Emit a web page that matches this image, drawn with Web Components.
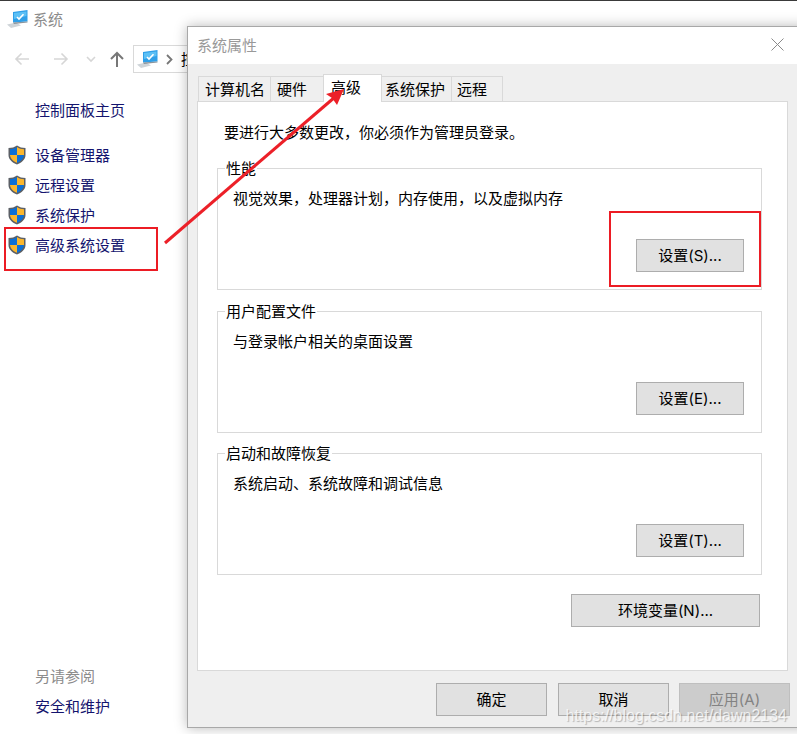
<!DOCTYPE html>
<html lang="zh">
<head>
<meta charset="utf-8">
<title>系统属性</title>
<style>
html, body { margin: 0; padding: 0; background: #fff; }
body { font: 15px/20px "Noto Sans", "Noto Sans CJK SC", sans-serif; color: #000; }
</style>
</head>
<body>
<x-desk>
	<x-explorer></x-explorer>
	<x-dialog heading="系统属性">
		<x-tabs>
			<x-tab style="width:73px;padding-left:6px">计算机名</x-tab>
			<x-tab style="width:54px;padding-left:6px">硬件</x-tab>
			<x-tab selected style="width:59px;padding-left:7px">高级</x-tab>
			<x-tab style="width:71px;padding-left:3px">系统保护</x-tab>
			<x-tab style="width:52px;padding-left:5px">远程</x-tab>
		</x-tabs>
		<x-panel>
			<x-group legend="性能" text="视觉效果，处理器计划，内存使用，以及虚拟内存" action="设置(S)..."></x-group>
			<x-group legend="用户配置文件" text="与登录帐户相关的桌面设置" action="设置(E)..."></x-group>
			<x-group legend="启动和故障恢复" text="系统启动、系统故障和调试信息" action="设置(T)..."></x-group>
		</x-panel>
	</x-dialog>
	<x-annotations></x-annotations>
</x-desk>

<script>
'use strict';

const pcIcon = `
<svg width="22" height="20" viewBox="0 0 22 20" style="display:block">
	<path d="M0 15.5 L9 13.5 L14 16.5 L4 19 Z" fill="#cfd4d8"/>
	<path d="M6 3 L20.5 1 V12.5 L6 13.5 Z" fill="#2f9fe8"/>
	<path d="M7 4 L19.5 2.4 V7 L7 10 Z" fill="#5cc0f5"/>
	<path d="M6 13.5 L20.5 12.5 V13.5 L7 15 Z" fill="#8a949c"/>
	<path d="M10 8 L12 10 L16.5 5.2" fill="none" stroke="#fff" stroke-width="1.6"/>
</svg>`;

const shieldIcon = `
<svg width="18" height="20" viewBox="0 0 18 20" style="display:block">
	<path d="M9 .5 C11.5 2.2 14 3 17.5 3 V10 C17.5 14.5 13.5 17.8 9 19.5 C4.5 17.8 .5 14.5 .5 10 V3 C4 3 6.5 2.2 9 .5 Z" fill="#5c6066"/>
	<path d="M9 2 V10 H2 V4.3 C4.8 4.2 7 3.4 9 2 Z" fill="#0b6fd6"/>
	<path d="M9 2 C11 3.4 13.2 4.2 16 4.3 V10 H9 Z" fill="#fbb62c"/>
	<path d="M2 10 H9 V17.8 C5.4 16.3 2.3 13.8 2 10 Z" fill="#fbb62c"/>
	<path d="M9 10 H16 C15.7 13.8 12.6 16.3 9 17.8 Z" fill="#0b6fd6"/>
</svg>`;

const deskTemplate = document.createElement('template');
deskTemplate.innerHTML = `
<style>
:host {
	display: block;
	position: relative;
	width: 797px;
	height: 734px;
	overflow: hidden;
	background: #fff;
}
</style>
<slot></slot>
`;

class XDesk extends HTMLElement {
	constructor() {
		super();
		this.attachShadow({mode: 'open'}).appendChild(deskTemplate.content.cloneNode(true));
	}
}

customElements.define('x-desk', XDesk);

const explorerTemplate = document.createElement('template');
explorerTemplate.innerHTML = `
<style>
:host {
	display: flex;
	flex-direction: column;
	height: 734px;
	box-sizing: border-box;
	border-top: 1px solid #3a3a3a;
	padding: 8px 0 18px 0;
}
.title {
	display: flex;
	align-items: center;
	gap: 4px;
	height: 20px;
	padding-left: 7px;
	color: #8c8c8c;
}
.nav {
	display: flex;
	align-items: center;
	height: 28px;
	margin-top: 16px;
	padding-left: 14px;
}
.nav svg { display: block; flex: none; }
.address {
	display: flex;
	align-items: center;
	box-sizing: border-box;
	width: 200px;
	height: 28px;
	margin-left: 9px;
	border: 1px solid #d9d9d9;
	padding-left: 3px;
}
.address span { margin-left: 8px; white-space: nowrap; }
.home { margin: 27px 0 0 35px; color: #14146e; }
.tasks {
	display: flex;
	flex-direction: column;
	gap: 10px;
	margin: 25px 0 0 8px;
	color: #14146e;
}
.tasks div { display: flex; align-items: center; gap: 9px; height: 20px; }
.also { margin: auto 0 0 35px; color: #8c8c8c; }
.safe { margin: 10px 0 0 35px; color: #14146e; }
</style>
<div class="title">${pcIcon}<span>系统</span></div>
<div class="nav">
	<svg width="16" height="14" viewBox="0 0 16 14"><path d="M15 7 H2 M7.5 1.5 L2 7 L7.5 12.5" fill="none" stroke="#d6d6d6" stroke-width="1.6"/></svg>
	<svg style="margin-left:23px" width="16" height="14" viewBox="0 0 16 14"><path d="M1 7 H14 M8.5 1.5 L14 7 L8.5 12.5" fill="none" stroke="#d6d6d6" stroke-width="1.6"/></svg>
	<svg style="margin-left:17px" width="10" height="7" viewBox="0 0 10 7"><path d="M1 1 L5 5 L9 1" fill="none" stroke="#d6d6d6" stroke-width="1.6"/></svg>
	<svg style="margin-left:14px" width="14" height="16" viewBox="0 0 14 16"><path d="M7 16 V2 M1 8 L7 2 L13 8" fill="none" stroke="#777" stroke-width="2"/></svg>
	<div class="address">
		${pcIcon}
		<svg style="margin-left:7px" width="7" height="11" viewBox="0 0 7 11"><path d="M1 1 L5.5 5.5 L1 10" fill="none" stroke="#777" stroke-width="1.8"/></svg>
		<span>控制面板</span>
	</div>
</div>
<div class="home">控制面板主页</div>
<div class="tasks">
	<div>${shieldIcon}<span>设备管理器</span></div>
	<div>${shieldIcon}<span>远程设置</span></div>
	<div>${shieldIcon}<span>系统保护</span></div>
	<div>${shieldIcon}<span>高级系统设置</span></div>
</div>
<div class="also">另请参阅</div>
<div class="safe">安全和维护</div>
`;

class XExplorer extends HTMLElement {
	constructor() {
		super();
		this.attachShadow({mode: 'open'}).appendChild(explorerTemplate.content.cloneNode(true));
	}
}

customElements.define('x-explorer', XExplorer);

const buttonTemplate = document.createElement('template');
buttonTemplate.innerHTML = `
<style>
:host {
	display: flex;
	align-items: center;
	justify-content: center;
	box-sizing: border-box;
	flex: none;
	width: 108px;
	height: 33px;
	background: #e1e1e1;
	border: 1px solid #adadad;
	color: #000;
	font-family: Inter, "Noto Sans CJK SC", sans-serif;
}
:host([disabled]) {
	background: #cccccc;
	border-color: #bfbfbf;
	color: #838383;
}
</style>
<slot></slot>
`;

class XButton extends HTMLElement {
	constructor() {
		super();
		this.attachShadow({mode: 'open'}).appendChild(buttonTemplate.content.cloneNode(true));
	}
}

customElements.define('x-button', XButton);

const dialogTemplate = document.createElement('template');
dialogTemplate.innerHTML = `
<style>
:host {
	display: flex;
	flex-direction: column;
	position: absolute;
	left: 187px;
	top: 26px;
	width: 630px;
	height: 702px;
	box-sizing: border-box;
	border: 1px solid #a8a8a8;
	background: #efefef;
	box-shadow: 0 0 12px rgba(0, 0, 0, .28);
}
.head {
	display: flex;
	align-items: center;
	justify-content: space-between;
	flex: none;
	box-sizing: border-box;
	height: 37px;
	padding: 0 0 2px 9px;
	background: #fff;
	color: #999;
}
.close { display: block; margin-right: 32px; }
.body {
	display: flex;
	flex-direction: column;
	padding: 10px 0 0 9px;
}
.foot {
	display: flex;
	margin: 12px 0 0 239px;
	gap: 11px;
}
.foot x-button { width: 111px; }
.foot x-button:last-child { margin-left: -1px; }
</style>
<div class="head">
	<span class="name"></span>
	<svg class="close" width="13" height="13" viewBox="0 0 13 13"><path d="M.5 .5 L12.5 12.5 M12.5 .5 L.5 12.5" fill="none" stroke="#8a8a8a" stroke-width="1"/></svg>
</div>
<div class="body">
	<slot></slot>
	<div class="foot">
		<x-button>确定</x-button>
		<x-button>取消</x-button>
		<x-button disabled>应用(A)</x-button>
	</div>
</div>
`;

class XDialog extends HTMLElement {
	constructor() {
		super();
		this.attachShadow({mode: 'open'}).appendChild(dialogTemplate.content.cloneNode(true));
	}

	connectedCallback() {
		this.shadowRoot.querySelector('.name').textContent = this.getAttribute('heading');
	}
}

customElements.define('x-dialog', XDialog);

const tabsTemplate = document.createElement('template');
tabsTemplate.innerHTML = `
<style>
:host {
	display: flex;
	align-items: flex-end;
	height: 28px;
	margin: 0 0 -1px 1px;
	position: relative;
	z-index: 1;
}
</style>
<slot></slot>
`;

class XTabs extends HTMLElement {
	constructor() {
		super();
		this.attachShadow({mode: 'open'}).appendChild(tabsTemplate.content.cloneNode(true));
	}
}

customElements.define('x-tabs', XTabs);

const tabTemplate = document.createElement('template');
tabTemplate.innerHTML = `
<style>
:host {
	display: flex;
	align-items: center;
	box-sizing: border-box;
	height: 25px;
	margin-bottom: 1px;
	margin-right: -1px;
	border: 1px solid #d9d9d9;
	border-bottom: none;
	background: #efefef;
}
:host([selected]) {
	height: 28px;
	margin-bottom: 0;
	padding-bottom: 3px;
	background: #fff;
	position: relative;
	z-index: 1;
}
</style>
<slot></slot>
`;

class XTab extends HTMLElement {
	constructor() {
		super();
		this.attachShadow({mode: 'open'}).appendChild(tabTemplate.content.cloneNode(true));
	}
}

customElements.define('x-tab', XTab);

const panelTemplate = document.createElement('template');
panelTemplate.innerHTML = `
<style>
:host {
	display: flex;
	flex-direction: column;
	box-sizing: border-box;
	width: 591px;
	height: 570px;
	padding: 20px 25px 0 19px;
	background: #fff;
	border: 1px solid #d9d9d9;
}
.intro { margin: 0 0 26px 7px; }
.env { display: flex; justify-content: flex-end; margin: 19px 2px 0 0; }
.env x-button { width: 189px; }
::slotted(x-group) { margin-bottom: 20px; }
::slotted(x-group:first-child) { margin-bottom: 21px; }
::slotted(x-group:last-child) { margin-bottom: 0; }
</style>
<div class="intro">要进行大多数更改，你必须作为管理员登录。</div>
<slot></slot>
<div class="env"><x-button>环境变量(N)...</x-button></div>
`;

class XPanel extends HTMLElement {
	constructor() {
		super();
		this.attachShadow({mode: 'open'}).appendChild(panelTemplate.content.cloneNode(true));
	}
}

customElements.define('x-panel', XPanel);

const groupTemplate = document.createElement('template');
groupTemplate.innerHTML = `
<style>
:host {
	display: flex;
	flex-direction: column;
	box-sizing: border-box;
	height: 122px;
	padding: 0 17px 17px 15px;
	border: 1px solid #d9d9d9;
}
.legend {
	align-self: flex-start;
	margin: -11px 0 0 -8px;
	padding: 0 1px;
	background: #fff;
}
.text { margin-top: 10px; }
x-button { align-self: flex-end; margin-top: auto; }
</style>
<div class="legend"></div>
<div class="text"></div>
<x-button></x-button>
`;

class XGroup extends HTMLElement {
	constructor() {
		super();
		this.attachShadow({mode: 'open'}).appendChild(groupTemplate.content.cloneNode(true));
	}

	connectedCallback() {
		const shadow = this.shadowRoot;
		shadow.querySelector('.legend').textContent = this.getAttribute('legend');
		shadow.querySelector('.text').textContent = this.getAttribute('text');
		shadow.querySelector('x-button').textContent = this.getAttribute('action');
	}
}

customElements.define('x-group', XGroup);

const annotationsTemplate = document.createElement('template');
annotationsTemplate.innerHTML = `
<style>
:host {
	display: block;
	position: absolute;
	inset: 0;
	z-index: 2;
	pointer-events: none;
}
svg { position: absolute; left: 0; top: 0; }
.mark {
	position: absolute;
	right: 10px;
	top: 705px;
	font: 16px/22px "Liberation Sans", sans-serif;
	color: rgba(255, 255, 255, .75);
	text-shadow: 1px 1px 1px rgba(0, 0, 0, .25);
}
</style>
<svg width="797" height="734" viewBox="0 0 797 734">
	<rect x="5" y="228" width="152" height="42" fill="none" stroke="#ec1c24" stroke-width="2"/>
	<rect x="610" y="212" width="150" height="74" fill="none" stroke="#ec1c24" stroke-width="2"/>
	<path d="M165 243 L335 97" fill="none" stroke="#ec2028" stroke-width="3"/>
	<path d="M344 89 L337 105 L332 98 L326 94 Z" fill="#ec2028"/>
</svg>
<div class="mark">https://blog.csdn.net/dawn2134</div>
`;

class XAnnotations extends HTMLElement {
	constructor() {
		super();
		this.attachShadow({mode: 'open'}).appendChild(annotationsTemplate.content.cloneNode(true));
	}
}

customElements.define('x-annotations', XAnnotations);
</script>
</body>
</html>
